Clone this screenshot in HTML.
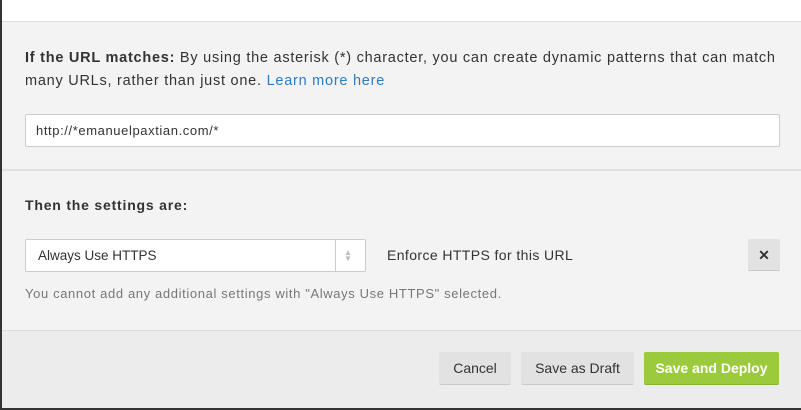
<!DOCTYPE html>
<html><head><style>
*{margin:0;padding:0;box-sizing:border-box}
body{width:801px;height:410px;overflow:hidden;background:#333;font-family:"Liberation Sans",sans-serif;position:relative;color:#333}
.a{position:absolute}
.t{font-size:14px;white-space:nowrap}
.btn{position:absolute;top:352px;height:33px;background:#e2e2e2;border-bottom:1px solid #c9c9c9;border-radius:2px;font-size:14px;line-height:32px;text-align:center;color:#333}
</style></head><body>
<div class="a" style="left:2px;top:0;width:799px;height:408px;background:#f3f3f3"></div>
<div class="a" style="left:2px;top:0;width:799px;height:22px;background:#fff;border-bottom:1px solid #ddd"></div>
<div class="t a" style="left:25px;top:47px;line-height:23px;font-size:14.5px;letter-spacing:0.75px">
<b>If the URL matches:</b> By using the asterisk (*) character, you can create dynamic patterns that can match<br>many URLs, rather than just one. <span style="color:#2f7bbf">Learn more here</span></div>
<div class="a" style="left:25px;top:114px;width:755px;height:33px;background:#fff;border:1px solid #ccc;border-radius:2px;font-size:13px;line-height:31px;padding-left:10px;letter-spacing:0.6px">http://*emanuelpaxtian.com/*</div>
<div class="a" style="left:2px;top:169px;width:799px;height:2px;background:#e0e0e0"></div>
<div class="t a" style="left:25px;top:197px;font-weight:bold;letter-spacing:0.8px">Then the settings are:</div>
<div class="a" style="left:25px;top:239px;width:341px;height:33px;background:#fff;border:1px solid #ccc;border-radius:2px;font-size:13.5px;line-height:31px;padding-left:12px">Always Use HTTPS
<div class="a" style="left:309px;top:0;width:1px;height:31px;background:#ccc"></div>
<div class="a" style="left:318px;top:10px;font-size:8px;line-height:6px;color:#bbb">▲<br>▼</div></div>
<div class="t a" style="left:387px;top:247px;font-size:14px;letter-spacing:0.4px">Enforce HTTPS for this URL</div>
<div class="a" style="left:748px;top:239px;width:32px;height:32px;background:#e2e2e2;border-bottom:1px solid #c9c9c9;border-radius:2px;text-align:center;line-height:32px;font-size:14px;font-weight:bold">✕</div>
<div class="t a" style="left:25px;top:286px;font-size:13px;color:#777;letter-spacing:0.63px">You cannot add any additional settings with "Always Use HTTPS" selected.</div>
<div class="a" style="left:2px;top:330px;width:799px;height:78px;background:#ececec;border-top:1px solid #ddd"></div>
<div class="btn" style="left:439px;width:72px">Cancel</div>
<div class="btn" style="left:521px;width:113px">Save as Draft</div>
<div class="btn" style="left:644px;width:135px;background:#9bcb3c;border-bottom-color:#86b32d;color:#fff;font-weight:bold">Save and Deploy</div>
</body></html>
